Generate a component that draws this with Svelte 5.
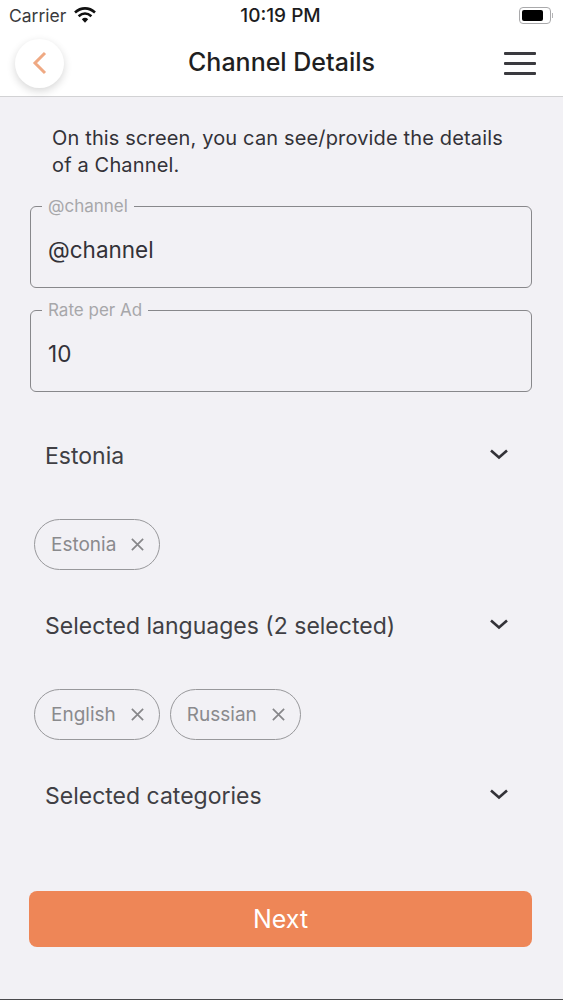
<script>
	const rows = [
		{ label: 'Estonia', chips: ['Estonia'] },
		{ label: 'Selected languages (2 selected)', chips: ['English', 'Russian'] },
		{ label: 'Selected categories', chips: [] },
	];
	const fields = [
		{ label: '@channel', value: '@channel' },
		{ label: 'Rate per Ad', value: '10' },
	];
</script>

<main class="screen">
	<div class="status">
		<div class="carrier">
			<span>Carrier</span>
			<svg width="24" height="18" viewBox="0 0 24 18">
				<path d="M2 6.5C8 1 16 1 22 6.5" fill="none" stroke="#111" stroke-width="2.6" />
				<path d="M5.6 10.3C9.6 6.8 14.4 6.8 18.4 10.3" fill="none" stroke="#111" stroke-width="2.6" />
				<path d="M8.8 13.2C10.8 11.4 13.2 11.4 15.2 13.2L12 16.8Z" fill="#111" />
			</svg>
		</div>
		<span class="time">10:19 PM</span>
		<div class="battery"><i></i></div>
	</div>

	<header class="nav">
		<button class="back" aria-label="Back">
			<svg width="16" height="26" viewBox="0 0 16 26">
				<path d="M13 3L3 13L13 23" fill="none" stroke="#efa983" stroke-width="3" />
			</svg>
		</button>
		<h1>Channel Details</h1>
		<div class="menu"><i></i><i></i><i></i></div>
	</header>

	<section class="body">
		<p class="intro">On this screen, you can see/provide the details<br />of a Channel.</p>

		{#each fields as f}
			<fieldset class="field">
				<legend>{f.label}</legend>
				<span>{f.value}</span>
			</fieldset>
		{/each}

		<div class="rows">
			{#each rows as row}
				<div class="select">
					<span>{row.label}</span>
					<svg width="20" height="12" viewBox="0 0 20 12">
						<path d="M2 2.5L10 9.5L18 2.5" fill="none" stroke="#333238" stroke-width="2.6" />
					</svg>
				</div>
				{#if row.chips.length}
					<div class="chips">
						{#each row.chips as chip}
							<div class="chip">
								<span>{chip}</span>
								<svg width="15" height="15" viewBox="0 0 16 16">
									<path d="M2 2L14 14M14 2L2 14" fill="none" stroke="#87878a" stroke-width="1.8" />
								</svg>
							</div>
						{/each}
					</div>
				{/if}
			{/each}
		</div>

		<button class="next">Next</button>
	</section>
</main>

<style>
	:global(body) {
		margin: 0;
		background: #f2f1f5;
	}

	.screen {
		width: 563px;
		height: 1000px;
		box-sizing: border-box;
		border-bottom: 1px solid #4a4a4c;
		display: flex;
		flex-direction: column;
		font-family: Inter, "Liberation Sans", sans-serif;
		color: #333238;
		overflow: hidden;
	}

	/* status bar */
	.status {
		height: 30px;
		background: #fff;
		display: flex;
		align-items: center;
		justify-content: space-between;
		padding: 0 12px 0 9px;
		position: relative;
	}

	.carrier {
		display: flex;
		align-items: center;
		gap: 7px;
		color: #3a3a3c;
		font-size: 17.5px;
	}

	.time {
		position: absolute;
		left: 0;
		right: 0;
		padding-right: 2px;
		text-align: center;
		color: #1c1c1e;
		font-weight: 500;
		font-size: 19px;
	}

	.battery {
		width: 32px;
		height: 17px;
		box-sizing: border-box;
		border: 1px solid #a9a9ab;
		border-radius: 4px;
		padding: 2px;
		display: flex;
		position: relative;
	}

	.battery::after {
		content: '';
		position: absolute;
		right: -3px;
		top: 5px;
		width: 1px;
		height: 5px;
		background: #b5b5b7;
	}

	.battery i {
		width: 21px;
		background: #000;
		border-radius: 2px;
	}

	/* nav */
	.nav {
		height: 66px;
		background: #fff;
		border-bottom: 1px solid #d2d2d4;
		display: flex;
		align-items: center;
		justify-content: space-between;
		padding: 0 27px 0 15px;
		position: relative;
	}

	.nav h1 {
		position: absolute;
		left: 0;
		right: 0;
		margin: 0 0 2px;
		text-align: center;
		font-size: 25px;
		font-weight: 500;
		color: #1f1f22;
	}

	.back {
		width: 49px;
		height: 49px;
		border: 0;
		border-radius: 50%;
		background: #fff;
		box-shadow: 0 3px 8px rgba(0, 0, 0, 0.16);
		display: flex;
		align-items: center;
		justify-content: center;
		padding: 0;
		position: relative;
		z-index: 1;
	}

	.menu {
		display: flex;
		flex-direction: column;
		gap: 7px;
	}

	.menu i {
		width: 32px;
		height: 3px;
		background: #3a3a3f;
		border-radius: 1px;
	}

	/* body */
	.body {
		flex: 1;
		padding: 0 31px 52px 29px;
		display: flex;
		flex-direction: column;
	}

	.intro {
		margin: 28px 0 0 23px;
		font-size: 20px;
		line-height: 27px;
		color: #333238;
		letter-spacing: 0.15px;
		white-space: nowrap;
	}

	.field {
		margin: 18px 0 0 1px;
		padding: 0 17px;
		height: 91px;
		box-sizing: border-box;
		border: 1.5px solid #88888b;
		border-radius: 6px;
		display: block;
	}

	.field + .field {
		margin-top: 13px;
	}

	.field legend {
		padding: 0 6px;
		margin-left: -6px;
		font-size: 17px;
		line-height: 18px;
		color: #a7a7aa;
	}

	.field span {
		display: block;
		margin-top: 20px;
		font-size: 22.5px;
		line-height: 30px;
		color: #333238;
	}

	.rows {
		margin-top: 14px;
		display: flex;
		flex-direction: column;
	}

	.select {
		height: 100px;
		display: flex;
		align-items: center;
		justify-content: space-between;
		padding: 0 23px 0 16px;
		font-size: 23px;
		color: #403f44;
	}

	.select svg {
		margin-top: -4px;
	}

	.chips {
		display: flex;
		gap: 10px;
		padding-left: 5px;
		margin: 13px 0 6px;
	}

	.chip {
		height: 51px;
		box-sizing: border-box;
		border: 1.5px solid #98989b;
		border-radius: 26px;
		display: flex;
		align-items: center;
		gap: 14px;
		padding: 0 14px 0 16px;
		font-size: 19px;
		color: #8a8a8d;
	}

	.next {
		margin-top: auto;
		width: 503px;
		height: 56px;
		border: 0;
		border-radius: 8px;
		background: #ee8657;
		color: #fff;
		font-family: inherit;
		font-size: 25px;
	}
</style>
